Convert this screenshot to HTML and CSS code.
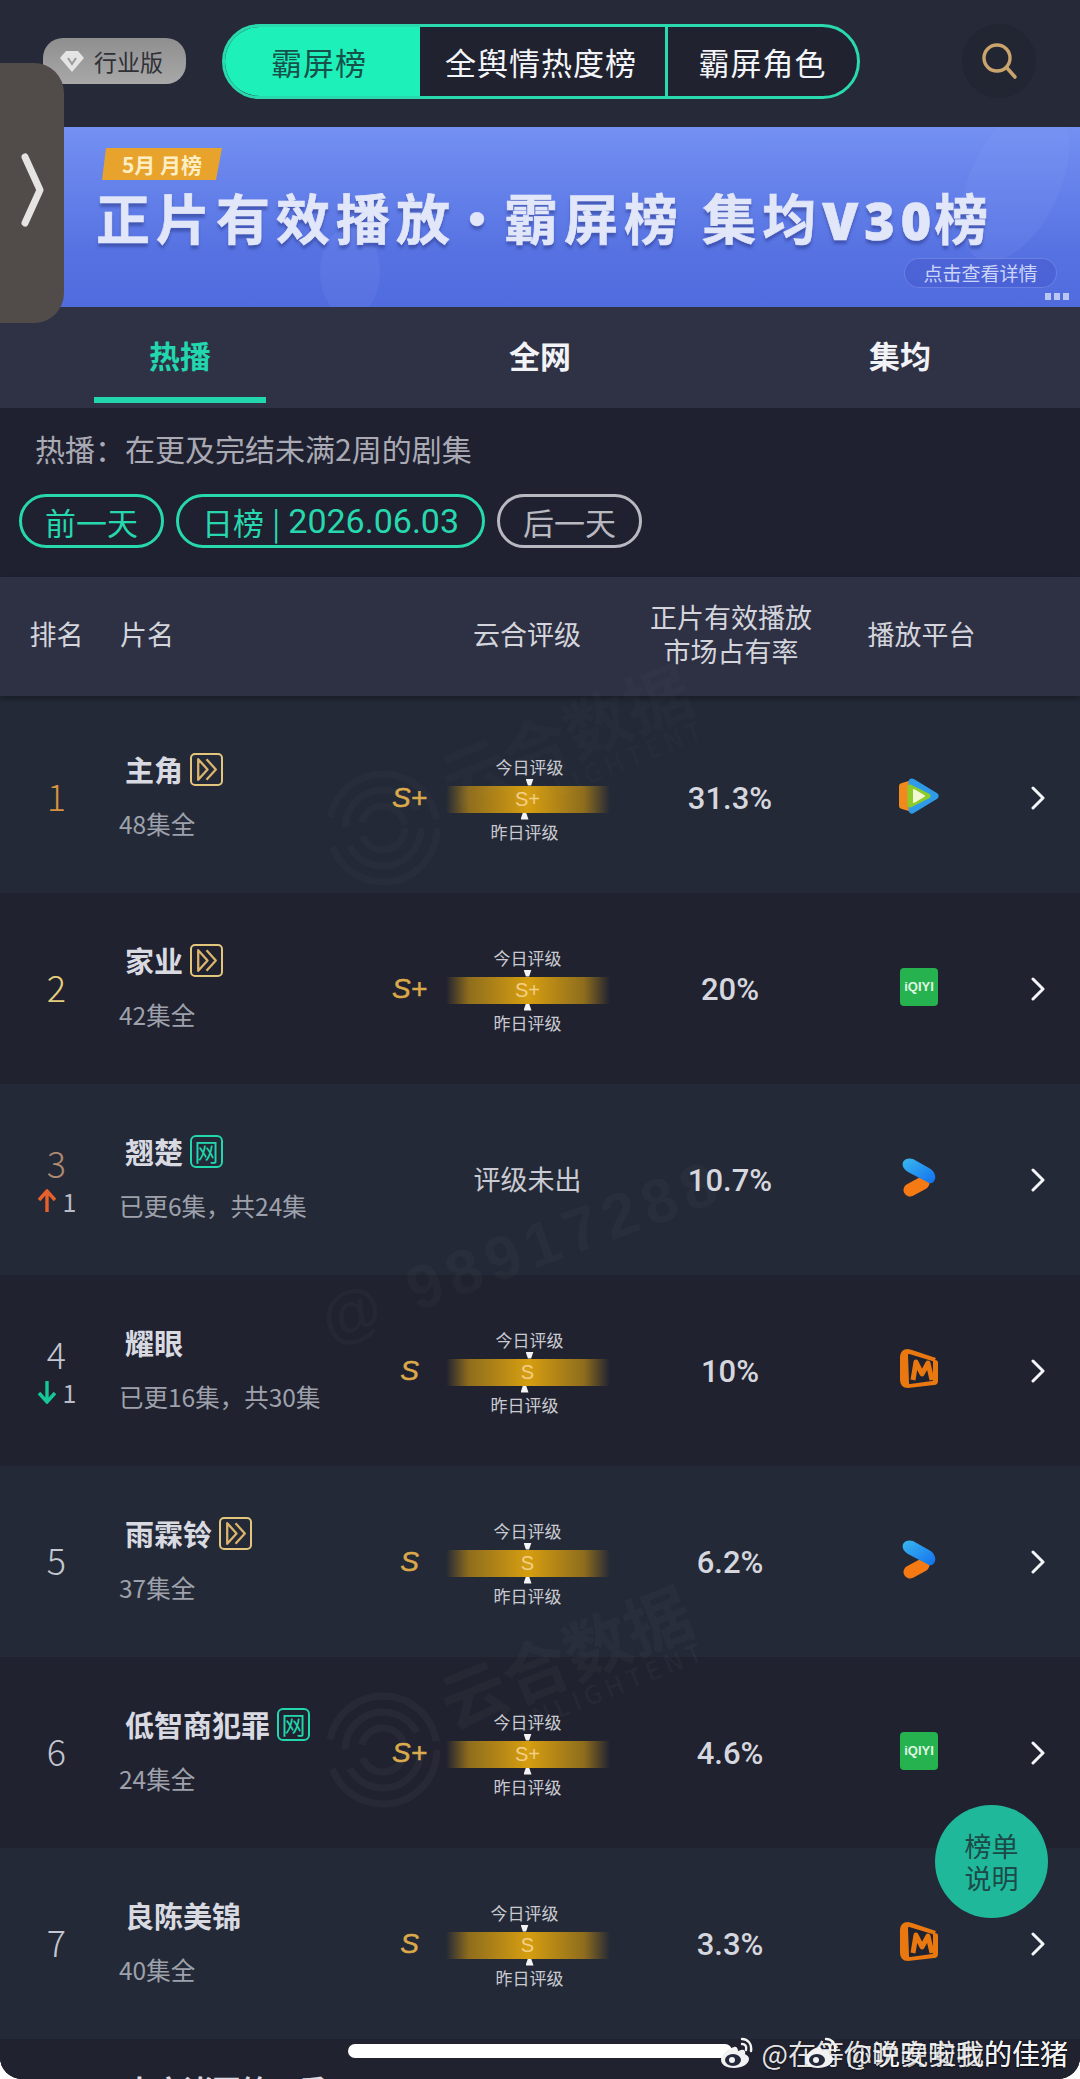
FILE: index.html
```html
<!DOCTYPE html>
<html>
<head>
	<meta charset="UTF-8">
	<meta name="viewport" content="width=device-width,initial-scale=1">
	<title>霸屏榜</title>
	<link rel="stylesheet" href="styles.css">
</head>
<body>
<svg class="defs" width="0" height="0">
	<symbol id="ic-next" viewBox="0 0 14 24"><path d="M2 2l10 10L2 22" fill="none" stroke="#f4f5f8" stroke-width="3" stroke-linecap="round" stroke-linejoin="round"/></symbol>
	<symbol id="ic-tencent" viewBox="0 0 42 38">
		<path d="M4 9l10-3v26L4 29z" fill="#f08a1c" stroke="#f08a1c" stroke-width="6" stroke-linejoin="round"/>
		<path d="M14 5l23 14-23 14z" fill="#2f9be8" stroke="#2f9be8" stroke-width="7" stroke-linejoin="round"/>
		<path d="M12 10l18 9-18 9z" fill="#8ccb2a" stroke="#8ccb2a" stroke-width="5" stroke-linejoin="round"/>
		<path d="M16 13l10 6-10 6z" fill="#f2f7d4" stroke="#f2f7d4" stroke-width="2" stroke-linejoin="round"/>
	</symbol>
	<symbol id="ic-youku" viewBox="0 0 34 39">
		<defs><linearGradient id="yk" x1="0" y1="0" x2="1" y2="1"><stop offset="0" stop-color="#3ab8ee"/><stop offset="1" stop-color="#1270f0"/></linearGradient></defs>
		<path d="M8 32l13-7" stroke="#f57a14" stroke-width="13" stroke-linecap="round"/>
		<path d="M1 4C3 0 8 0 11 1l16 9c6 3 7 9 6 11-1 3-3 5-6 4L6 14C1 11 0 7 1 4z" fill="url(#yk)"/>
	</symbol>
	<symbol id="ic-mango" viewBox="0 0 38 40">
		<path d="M8 0C3 0 0 3 0 9v21c0 6 3 9 8 9l26-3c3 0 4-2 4-4V14c0-2-1-3-3-3l1-2L12 1z" fill="#e8780f"/>
		<path d="M9 6l23 7v18l-22 3z" fill="#1f2230" stroke="#1f2230" stroke-width="2" stroke-linejoin="round"/>
		<path d="M13 31l3-18 6 12 6-11 4 17" fill="none" stroke="#e8780f" stroke-width="5" stroke-linejoin="round"/>
	</symbol>
	<symbol id="ic-weibo" viewBox="0 0 34 32">
		<path d="M14 10C7 12 1 18 1 23c0 5 6 8 13 8 8 0 15-4 15-9 0-3-3-4-4-5 1-3-1-5-4-4l-3 1c0-3-2-5-4-4z" fill="#f2f2f2"/>
		<ellipse cx="13" cy="23" rx="8" ry="6" fill="#23283a"/>
		<circle cx="12" cy="23" r="3" fill="#f2f2f2"/>
		<path d="M22 2c6 0 10 5 9 12M22 7c3 0 5 2 4 6" fill="none" stroke="#f2f2f2" stroke-width="2.4" stroke-linecap="round"/>
	</symbol>
	<symbol id="ic-fast" viewBox="0 0 28 28">
		<path d="M6 4l9 10-9 10zM14 4l9 10-9 10" fill="none" stroke="#dcb46c" stroke-width="2.2" stroke-linejoin="round"/>
	</symbol>
</svg>

<div class="screen">
	<header class="topbar">
		<div class="vip">
			<svg width="24" height="22" viewBox="0 0 24 22"><path d="M6 1h12l6 7-12 14L0 8z" fill="#e4e4e4"/><path d="M8 8l4 6 4-6" fill="none" stroke="#9a9a9a" stroke-width="2"/></svg>
			<span>行业版</span>
		</div>
		<nav class="switch">
			<a class="switch-item active">霸屏榜</a>
			<a class="switch-item wide">全舆情热度榜</a>
			<a class="switch-item">霸屏角色</a>
		</nav>
		<div class="search">
			<svg width="38" height="38" viewBox="0 0 38 38"><circle cx="17" cy="16" r="13" fill="none" stroke="#c9a46c" stroke-width="3.4"/><path d="M27 26l8 9" stroke="#c9a46c" stroke-width="3.6" stroke-linecap="round"/></svg>
		</div>
	</header>

	<section class="banner">
		<span class="blob blob-a"></span>
		<span class="blob blob-b"></span>
		<div class="banner-tag">5月 月榜</div>
		<div class="banner-title">正片有效播放<i>·</i>霸屏榜 集均<b>V30</b>榜</div>
		<div class="banner-more">点击查看详情</div>
		<span class="banner-dots"><i></i><i></i><i></i></span>
	</section>

	<div class="tabs">
		<a class="tab active">热播</a>
		<a class="tab">全网</a>
		<a class="tab">集均</a>
	</div>

	<section class="info">
		<p class="info-text">热播&#xFF1A;在更及完结未满2周的剧集</p>
		<div class="dates">
			<span class="date-btn">前一天</span>
			<span class="date-btn current">日榜 <i>|</i> <b>2026.06.03</b></span>
			<span class="date-btn off">后一天</span>
		</div>
	</section>

	<div class="thead">
		<span class="th-rank">排名</span>
		<span class="th-name">片名</span>
		<span class="th-rate">云合评级</span>
		<span class="th-share">正片有效播放<br>市场占有率</span>
		<span class="th-plat">播放平台</span>
	</div>

	<div class="rows">
		<div class="row odd">
			<div class="rank"><span class="num gold">1</span></div>
			<div class="name">
				<div class="title">主角<svg class="tag-fast"><use href="#ic-fast"/></svg></div>
				<div class="sub">48集全</div>
			</div>
			<div class="grade">S+</div>
			<div class="gauge">
				<div class="mark off-r"><span>今日评级</span><u class="tick-down"></u></div>
				<div class="bar">S+</div>
				<div class="mark off-l"><u class="tick-up"></u><span>昨日评级</span></div>
			</div>
			<div class="share">31.3%</div>
			<svg class="plat plat-tx"><use href="#ic-tencent"/></svg>
			<svg class="next"><use href="#ic-next"/></svg>
		</div>

		<div class="row">
			<div class="rank"><span class="num yellow">2</span></div>
			<div class="name">
				<div class="title">家业<svg class="tag-fast"><use href="#ic-fast"/></svg></div>
				<div class="sub">42集全</div>
			</div>
			<div class="grade">S+</div>
			<div class="gauge">
				<div class="mark"><span>今日评级</span><u class="tick-down"></u></div>
				<div class="bar">S+</div>
				<div class="mark"><u class="tick-up"></u><span>昨日评级</span></div>
			</div>
			<div class="share">20%</div>
			<div class="plat iqiyi">iQIYI</div>
			<svg class="next"><use href="#ic-next"/></svg>
		</div>

		<div class="row odd">
			<div class="rank">
				<span class="num bronze">3</span>
				<span class="delta"><svg width="20" height="24" viewBox="0 0 20 24"><path d="M10 23V3M2 11l8-9 8 9" fill="none" stroke="#e8602c" stroke-width="3.4"/></svg>1</span>
			</div>
			<div class="name">
				<div class="title">翘楚<span class="tag-net">网</span></div>
				<div class="sub">已更6集&#xFF0C;共24集</div>
			</div>
			<div class="grade"></div>
			<div class="pending">评级未出</div>
			<div class="share">10.7%</div>
			<svg class="plat plat-yk"><use href="#ic-youku"/></svg>
			<svg class="next"><use href="#ic-next"/></svg>
		</div>

		<div class="row">
			<div class="rank">
				<span class="num">4</span>
				<span class="delta"><svg width="20" height="24" viewBox="0 0 20 24"><path d="M10 1v20M2 13l8 9 8-9" fill="none" stroke="#16c79a" stroke-width="3.4"/></svg>1</span>
			</div>
			<div class="name">
				<div class="title">耀眼</div>
				<div class="sub">已更16集&#xFF0C;共30集</div>
			</div>
			<div class="grade">S</div>
			<div class="gauge">
				<div class="mark off-r"><span>今日评级</span><u class="tick-down"></u></div>
				<div class="bar">S</div>
				<div class="mark off-l"><u class="tick-up"></u><span>昨日评级</span></div>
			</div>
			<div class="share">10%</div>
			<svg class="plat plat-mg"><use href="#ic-mango"/></svg>
			<svg class="next"><use href="#ic-next"/></svg>
		</div>

		<div class="row odd">
			<div class="rank"><span class="num">5</span></div>
			<div class="name">
				<div class="title">雨霖铃<svg class="tag-fast"><use href="#ic-fast"/></svg></div>
				<div class="sub">37集全</div>
			</div>
			<div class="grade">S</div>
			<div class="gauge">
				<div class="mark"><span>今日评级</span><u class="tick-down"></u></div>
				<div class="bar">S</div>
				<div class="mark"><u class="tick-up"></u><span>昨日评级</span></div>
			</div>
			<div class="share">6.2%</div>
			<svg class="plat plat-yk"><use href="#ic-youku"/></svg>
			<svg class="next"><use href="#ic-next"/></svg>
		</div>

		<div class="row">
			<div class="rank"><span class="num">6</span></div>
			<div class="name">
				<div class="title">低智商犯罪<span class="tag-net">网</span></div>
				<div class="sub">24集全</div>
			</div>
			<div class="grade">S+</div>
			<div class="gauge">
				<div class="mark"><span>今日评级</span><u class="tick-down"></u></div>
				<div class="bar">S+</div>
				<div class="mark"><u class="tick-up"></u><span>昨日评级</span></div>
			</div>
			<div class="share">4.6%</div>
			<div class="plat iqiyi">iQIYI</div>
			<svg class="next"><use href="#ic-next"/></svg>
		</div>

		<div class="row odd">
			<div class="rank"><span class="num">7</span></div>
			<div class="name">
				<div class="title">良陈美锦</div>
				<div class="sub">40集全</div>
			</div>
			<div class="grade">S</div>
			<div class="gauge">
				<div class="mark off-l"><span>今日评级</span><u class="tick-down"></u></div>
				<div class="bar">S</div>
				<div class="mark off-r"><u class="tick-up"></u><span>昨日评级</span></div>
			</div>
			<div class="share">3.3%</div>
			<svg class="plat plat-mg"><use href="#ic-mango"/></svg>
			<svg class="next"><use href="#ic-next"/></svg>
		</div>

		<div class="row-cut">大宋诸国第二季</div>
	</div>

	<!-- faint watermarks burnt into the picture -->
	<div class="wm wm-one">
		<svg class="wm-rings" width="120" height="120" viewBox="0 0 120 120"><g fill="none" stroke="#fff" stroke-width="7"><circle cx="60" cy="60" r="54" stroke-dasharray="150 30"/><circle cx="60" cy="60" r="38" stroke-dasharray="100 20"/><circle cx="60" cy="60" r="22" stroke-dasharray="60 14"/></g></svg>
		<div class="wm-text">云合数据<small>ENLIGHTENT</small></div>
	</div>
	<div class="wm wm-two">
		<svg class="wm-rings" width="120" height="120" viewBox="0 0 120 120"><g fill="none" stroke="#fff" stroke-width="7"><circle cx="60" cy="60" r="54" stroke-dasharray="150 30"/><circle cx="60" cy="60" r="38" stroke-dasharray="100 20"/><circle cx="60" cy="60" r="22" stroke-dasharray="60 14"/></g></svg>
		<div class="wm-text">云合数据<small>ENLIGHTENT</small></div>
	</div>
	<div class="wm-id">@ 98917288</div>

	<div class="handle">
		<svg width="24" height="74" viewBox="0 0 24 74"><path d="M5 4l15 33L5 70" fill="none" stroke="#e6e4e2" stroke-width="7" stroke-linecap="round" stroke-linejoin="round"/></svg>
	</div>
	<div class="fab">榜单<br>说明</div>
	<div class="home-bar"></div>
	<div class="credit credit-a"><svg><use href="#ic-weibo"/></svg>@在等你说晚安啦的佳猪</div>
	<div class="credit credit-b"><svg><use href="#ic-weibo"/></svg>@晚安啦我的佳猪</div>
</div>
</body>
</html>
```

FILE: styles.css
```css
*{
	box-sizing: border-box;
}
body{
	margin: 0;
	background: #fff;
	font-family: "Noto Sans CJK SC", "Noto Sans", sans-serif;
	color: #d8d9e0;
}
.defs{
	position: absolute;
}
.screen{
	position: relative;
	width: 1080px;
	height: 2079px;
	overflow: hidden;
	background: #20222f;
	border-radius: 0 0 22px 22px;
}

/* top bar */
.topbar{
	display: flex;
	align-items: center;
	height: 127px;
	padding: 0 44px 5px 43px;
	background: #262a38;
}
.vip{
	display: flex;
	align-items: center;
	gap: 10px;
	width: 143px;
	height: 46px;
	padding-left: 17px;
	border-radius: 20px;
	background: linear-gradient(180deg, #8f8f8f, #a8a8a8);
	color: #2f3036;
	font-size: 23px;
}
.switch{
	display: flex;
	width: 638px;
	height: 75px;
	margin-left: 36px;
	border: 3px solid #2ad9ae;
	border-radius: 38px;
	overflow: hidden;
	background: #20232f;
}
.switch-item{
	display: flex;
	align-items: center;
	justify-content: center;
	width: 218px;
	font-size: 31px;
	letter-spacing: 1px;
	color: #f4f5f8;
}
.switch-item.wide{
	width: 248px;
	padding-right: 3px;
	border-right: 3px solid #2ad9ae;
}
.switch-item.active{
	width: 198px;
	margin: -3px 0 -3px -3px;
	padding-right: 4px;
	background: #1ef0ba;
	color: #17524a;
}
.switch-item:last-child{
	flex: 1;
	width: auto;
}
.search{
	display: flex;
	align-items: center;
	justify-content: center;
	width: 74px;
	height: 74px;
	margin-left: auto;
	border-radius: 50%;
	background: #222632;
}

/* banner */
.banner{
	position: relative;
	height: 180px;
	padding: 21px 23px 0 96px;
	overflow: hidden;
	background: linear-gradient(180deg, #7390f2, #5672e2 70%, #4f6bdd);
}
.blob{
	position: absolute;
	border-radius: 50%;
	background: rgba(140,165,250,.14);
}
.blob-a{
	top: -30px;
	right: 20px;
	width: 90px;
	height: 170px;
	transform: rotate(25deg);
}
.blob-b{
	top: 100px;
	left: 320px;
	width: 60px;
	height: 90px;
}
.banner-tag{
	position: relative;
	width: 120px;
	height: 32px;
	margin-left: 6px;
	background: #e7a32b;
	clip-path: polygon(4px 0, 100% 0, 114px 100%, 0 100%);
	color: #fdeec4;
	font-size: 21px;
	font-weight: 700;
	line-height: 32px;
	text-align: center;
}
.banner-title{
	position: relative;
	margin-top: 10px;
	font-size: 54px;
	font-weight: 700;
	line-height: 54px;
	letter-spacing: 6px;
	white-space: nowrap;
	color: #e2e6f9;
	-webkit-text-stroke: .6px #e2e6f9;
	text-shadow: 0 4px 3px rgba(45,60,140,.55);
}
.banner-title i{
	font-style: normal;
	margin: 0 -6px;
}
.banner-title b{
	font-family: "Noto Sans", sans-serif;
	font-size: 52px;
	margin: 0 -3px 0 0;
}
.banner-more{
	position: relative;
	width: 153px;
	height: 30px;
	margin: 11px 0 0 auto;
	border: 1px solid rgba(160,180,250,.35);
	border-radius: 15px;
	background: rgba(70,90,205,.55);
	color: #ccd5f8;
	font-size: 19px;
	line-height: 27px;
	text-align: center;
	white-space: nowrap;
}
.banner-dots{
	position: absolute;
	right: 11px;
	bottom: 7px;
	display: flex;
	gap: 3px;
}
.banner-dots i{
	width: 6px;
	height: 7px;
	background: #b9c6f6;
}

/* tabs */
.tabs{
	display: flex;
	height: 101px;
	background: #2f3145;
}
.tab{
	position: relative;
	flex: 1;
	padding-top: 21px;
	color: #f2f3f6;
	font-size: 31px;
	font-weight: 700;
	line-height: 54px;
	text-align: center;
}
.tab.active{
	color: #22d6ae;
}
.tab.active::after{
	content: "";
	position: absolute;
	left: 94px;
	bottom: 5px;
	width: 172px;
	height: 6px;
	background: #22d6ae;
}

/* info strip */
.info{
	height: 169px;
	padding: 22px 19px 0;
	background: #1f2030;
}
.info-text{
	margin: 0 0 0 16px;
	color: #a9aab3;
	font-size: 30px;
	line-height: 36px;
}
.dates{
	display: flex;
	gap: 12px;
	margin-top: 28px;
}
.date-btn{
	display: flex;
	align-items: center;
	justify-content: center;
	gap: 8px;
	width: 145px;
	height: 54px;
	border: 3px solid #27d8ae;
	border-radius: 27px;
	color: #27d8ae;
	font-size: 31px;
}
.date-btn.current{
	width: 309px;
}
.date-btn i{
	font-style: normal;
	font-weight: 400;
}
.date-btn b{
	font-family: Roboto, sans-serif;
	font-weight: 400;
	font-size: 34px;
}
.date-btn.off{
	border-color: #b8b9c0;
	color: #b8b9c0;
}

/* table header */
.thead{
	display: grid;
	position: relative;
	grid-template-columns: 113px 294px 240px 168px 1fr;
	align-items: center;
	height: 119px;
	padding-bottom: 6px;
	background: #2e3044;
	box-shadow: 0 3px 5px rgba(0,0,0,.3);
	color: #d4d5dc;
	font-size: 27px;
	line-height: 34px;
	text-align: center;
}
.th-name{
	text-align: left;
	padding-left: 7px;
}
.th-plat{
	padding-right: 52px;
}

/* rows */
.rows{
	padding-top: 6px;
	background: #232936;
}
.row{
	display: grid;
	grid-template-columns: 113px 257px 77px 161px 244px 134px 1fr;
	align-items: center;
	height: 191px;
	background: #20222f;
}
.row.odd{
	background: #232936;
}
.rank{
	display: flex;
	flex-direction: column;
	align-items: center;
	margin-top: -5px;
}
.num{
	font-size: 36px;
	line-height: 44px;
	font-weight: 300;
	color: #c4c6d0;
}
.num.gold{
	color: #d9923e;
}
.num.yellow{
	color: #e6cf7c;
}
.num.bronze{
	color: #ad8a72;
}
.delta{
	display: flex;
	align-items: center;
	gap: 6px;
	margin-top: 4px;
	color: #b9bbc5;
	font-size: 25px;
	line-height: 26px;
}
.name{
	padding-left: 6px;
	margin-top: -7px;
}
.title{
	display: flex;
	align-items: center;
	gap: 7px;
	height: 40px;
	padding-left: 6px;
	color: #d9dae1;
	font-size: 29px;
	font-weight: 700;
	white-space: nowrap;
}
.sub{
	margin-top: 20px;
	color: #9ea1ab;
	font-size: 24.5px;
	line-height: 30px;
	white-space: nowrap;
}
.tag-fast{
	width: 33px;
	height: 33px;
	border: 2.5px solid #e4c57c;
	border-radius: 5px;
}
.tag-net{
	width: 33px;
	height: 33px;
	border: 2.5px solid #22d6ae;
	border-radius: 6px;
	color: #22d6ae;
	font-size: 24px;
	font-weight: 400;
	line-height: 27px;
	text-align: center;
}
.grade{
	padding-left: 2px;
	color: #dba94a;
	font-family: "Liberation Sans", sans-serif;
	font-size: 28px;
	font-style: italic;
	-webkit-text-stroke: .5px #dba94a;
	text-align: center;
}
.gauge{
	display: flex;
	flex-direction: column;
	align-items: center;
	margin-top: 3px;
}
.mark{
	display: flex;
	flex-direction: column;
	align-items: center;
	color: #c9cad2;
	font-size: 17px;
	line-height: 24px;
	white-space: nowrap;
}
.mark.off-r{
	transform: translateX(2px);
}
.mark.off-l{
	transform: translateX(-3px);
}
.tick-down,
.tick-up{
	display: block;
	width: 8px;
	height: 7px;
	background: #f4f4f4;
}
.tick-down{
	clip-path: polygon(0 0, 100% 0, 70% 100%, 30% 100%);
}
.tick-up{
	clip-path: polygon(30% 0, 70% 0, 100% 100%, 0 100%);
}
.bar{
	width: 164px;
	height: 27px;
	background: linear-gradient(90deg, rgba(150,112,28,0), #8f6d1d 14%, #d69e10 50%, #8f6d1d 84%, rgba(150,112,28,0));
	color: #f3cf86;
	font-family: "Liberation Sans", sans-serif;
	font-size: 20px;
	line-height: 27px;
	text-align: center;
}
.pending{
	margin-top: -3px;
	color: #c9cad2;
	font-size: 27px;
	text-align: center;
	white-space: nowrap;
}
.share{
	margin-top: 1px;
	color: #d5d6de;
	font-family: Roboto, sans-serif;
	font-size: 31px;
	font-weight: 500;
	text-align: center;
}
.plat{
	justify-self: center;
	margin-bottom: 4px;
}
.plat-tx{
	width: 42px;
	height: 38px;
}
.plat-yk{
	width: 34px;
	height: 39px;
}
.plat-mg{
	width: 38px;
	height: 40px;
}
.iqiyi{
	width: 38px;
	height: 38px;
	border-radius: 4px;
	background: #25b24f;
	color: #e0f5e2;
	font-family: "Liberation Sans", sans-serif;
	font-size: 13px;
	font-weight: 700;
	line-height: 38px;
	text-align: center;
}
.next{
	width: 14px;
	height: 24px;
	margin-left: 45px;
}
.row-cut{
	height: 60px;
	padding: 30px 0 0 125px;
	background: #20222f;
	color: #d9dae1;
	font-size: 29px;
	font-weight: 700;
	line-height: 40px;
}

/* overlays */
.wm,
.wm-id{
	position: absolute;
	pointer-events: none;
}
.wm{
	display: flex;
	align-items: flex-start;
	left: 323px;
	height: 120px;
}
.wm-one{
	top: 768px;
	opacity: .6;
}
.wm-two{
	top: 1690px;
}
.wm-rings{
	flex: none;
	opacity: .03;
}
.wm-text{
	flex: none;
	margin: -24px 0 0 22px;
	color: rgba(255,255,255,.028);
	font-size: 66px;
	font-weight: 700;
	line-height: 66px;
	white-space: nowrap;
	transform: rotate(-22deg);
	transform-origin: 0 100%;
}
.wm-text small{
	display: block;
	font-size: 26px;
	line-height: 28px;
	letter-spacing: 4px;
	text-align: right;
}
.wm-id{
	left: 310px;
	top: 1215px;
	color: rgba(255,255,255,.025);
	font-family: "Liberation Sans", sans-serif;
	font-size: 62px;
	font-weight: 700;
	letter-spacing: 7px;
	white-space: nowrap;
	transform: rotate(-20deg);
}
.handle{
	position: absolute;
	left: 0;
	top: 63px;
	display: flex;
	align-items: center;
	width: 64px;
	height: 260px;
	padding: 0 0 6px 20px;
	border-radius: 0 30px 30px 0;
	background: #514c49;
}
.fab{
	position: absolute;
	left: 935px;
	top: 1805px;
	width: 113px;
	height: 113px;
	padding-top: 25px;
	border-radius: 50%;
	background: #1fb89a;
	color: #1c4a48;
	font-size: 27px;
	line-height: 32px;
	text-align: center;
}
.home-bar{
	position: absolute;
	left: 348px;
	top: 2044px;
	width: 384px;
	height: 14px;
	border-radius: 7px;
	background: #fff;
}
.credit{
	position: absolute;
	right: 12px;
	top: 2035px;
	display: flex;
	align-items: center;
	gap: 8px;
	color: rgba(255,255,255,.9);
	font-size: 28px;
	line-height: 36px;
	white-space: nowrap;
	text-shadow: 0 1px 2px rgba(0,0,0,.4);
}
.credit svg{
	width: 34px;
	height: 32px;
}
```
